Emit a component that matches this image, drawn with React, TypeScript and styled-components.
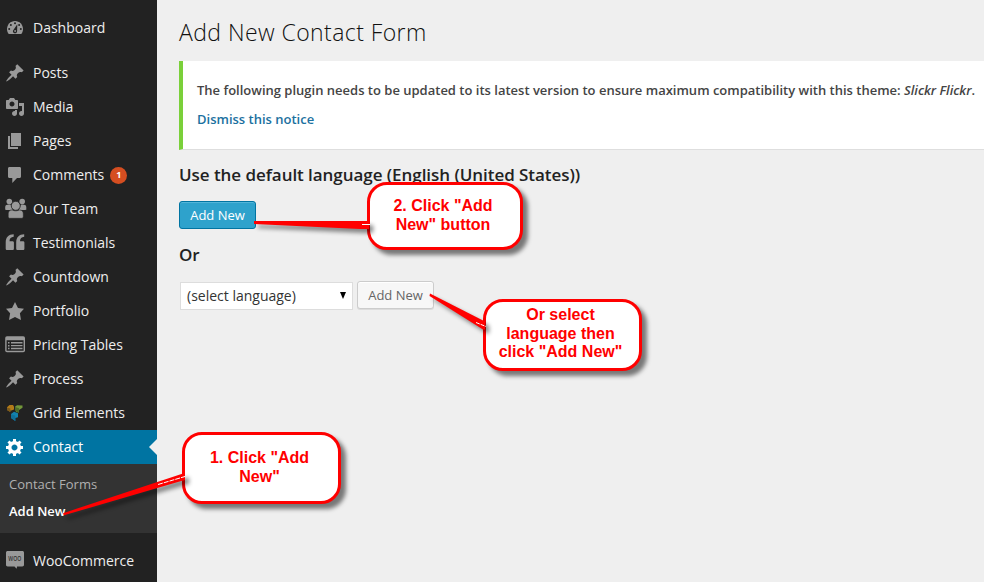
import React from "react";
import styled, { createGlobalStyle, css } from "styled-components";

const GlobalStyle = createGlobalStyle`
  * { box-sizing: border-box; }
  body {
    margin: 0;
    background: #efefef;
    font-family: "Open Sans", sans-serif;
    overflow: hidden;
  }
`;

const Page = styled.div`
  position: relative;
  display: flex;
  width: 984px;
  height: 582px;
  overflow: hidden;
  background: #efefef;
`;

const Sidebar = styled.nav`
  flex: none;
  width: 157px;
  padding-top: 11px;
  background: #222;
`;

const MenuItem = styled.a<{ $active?: boolean; $gap?: boolean }>`
  position: relative;
  display: flex;
  align-items: center;
  height: 34px;
  padding-left: 5px;
  margin-top: ${(p) => (p.$gap ? "11px" : "0")};
  color: ${(p) => (p.$active ? "#fff" : "#eee")};
  background: ${(p) => (p.$active ? "#0074a2" : "transparent")};
  font-size: 14px;
  line-height: 20px;
  white-space: nowrap;
  ${(p) =>
    p.$active &&
    css`
      &::after {
        content: "";
        position: absolute;
        right: 0;
        top: 9px;
        border: solid transparent;
        border-width: 8px 8px 8px 0;
        border-right-color: #efefef;
      }
    `}
`;

const Icon = styled.svg<{ $active?: boolean }>`
  flex: none;
  width: 22px;
  height: 20px;
  margin-right: 6px;
  overflow: visible;
  color: ${(p) => (p.$active ? "#fff" : "#999")};
  fill: currentColor;
`;

const Badge = styled.span`
  display: flex;
  align-items: center;
  justify-content: center;
  width: 17px;
  height: 17px;
  margin-left: 6px;
  border-radius: 50%;
  background: #d54e21;
  color: #fff;
  font-size: 9px;
  font-weight: 700;
`;

const Submenu = styled.div`
  display: flex;
  flex-direction: column;
  height: 69px;
  padding: 7px 0 0 9px;
  background: #333;
`;

const SubItem = styled.a<{ $current?: boolean }>`
  height: 27px;
  line-height: 27px;
  font-size: 13px;
  font-weight: ${(p) => (p.$current ? 600 : 400)};
  color: ${(p) => (p.$current ? "#fff" : "#b0b0b0")};
`;

const Main = styled.main`
  flex: 1;
  min-width: 0;
  padding-left: 22px;
`;

const Title = styled.h1`
  height: 61px;
  margin: 0;
  padding-top: 17px;
  font-size: 23px;
  font-weight: 300;
  letter-spacing: 0.43px;
  line-height: 31px;
  color: #111;
`;

const Notice = styled.section`
  height: 89px;
  padding: 19px 0 0 14px;
  border-left: 4px solid #7ad03a;
  border-bottom: 1px solid #dedede;
  background: #fff;
`;

const NoticeLine = styled.p`
  margin: 0 0 9px;
  font-size: 13px;
  font-weight: 600;
  line-height: 20px;
  color: #444;
  white-space: nowrap;
`;

const NoticeLink = styled.a`
  color: #1c71a0;
`;

const Heading = styled.h3<{ $top: number }>`
  margin: ${(p) => p.$top}px 0 0;
  font-size: 17px;
  font-weight: 600;
  letter-spacing: -0.05px;
  line-height: 24px;
  color: #222;
  white-space: nowrap;
`;

const Button = styled.button<{ $primary?: boolean }>`
  display: block;
  width: 77px;
  height: 28px;
  padding: 0;
  border: 1px solid ${(p) => (p.$primary ? "#0074a2" : "#ccc")};
  border-radius: 3px;
  background: ${(p) => (p.$primary ? "#2ea2cc" : "#f7f7f7")};
  box-shadow: ${(p) =>
    p.$primary
      ? "inset 0 1px 0 rgba(120, 200, 230, 0.5)"
      : "inset 0 1px 0 #fff, 0 1px 0 rgba(0, 0, 0, 0.08)"};
  color: ${(p) => (p.$primary ? "#fff" : "#666")};
  font: 400 13px/26px "Open Sans", sans-serif;
`;

const ButtonSlot = styled.div`
  padding-top: 14px;
`;

const LanguageRow = styled.div`
  display: flex;
  align-items: flex-start;
  margin-top: 14px;
`;

const Select = styled.div`
  display: flex;
  align-items: center;
  justify-content: space-between;
  width: 173px;
  height: 28px;
  margin: 1px 4px 0 1px;
  padding: 0 6px 1px;
  border: 1px solid #ddd;
  background: #fff;
  color: #333;
  font-size: 14px;
  line-height: 19px;
`;

const Caret = styled.span`
  width: 0;
  border: solid transparent;
  border-width: 7px 3.5px 0;
  border-top-color: #000;
`;

const Tails = styled.svg`
  position: absolute;
  inset: 0;
  width: 984px;
  height: 582px;
  pointer-events: none;
  filter: drop-shadow(4px 4px 2px rgba(0, 0, 0, 0.45));
`;

const Callout = styled.div<{ $x: number; $y: number; $w: number; $h: number; $pad: number }>`
  position: absolute;
  left: ${(p) => p.$x}px;
  top: ${(p) => p.$y}px;
  width: ${(p) => p.$w}px;
  height: ${(p) => p.$h}px;
  padding-top: ${(p) => p.$pad}px;
  padding-right: 4px;
  border: 3px solid #f00;
  border-radius: 20px;
  background: #fff;
  box-shadow: 5px 5px 4px rgba(0, 0, 0, 0.5);
  color: #f00;
  font: 700 16px/18.6px "Liberation Sans", Arial, sans-serif;
  text-align: center;
  white-space: pre;
`;

const WooText = styled.text`
  font: 600 6.5px "Open Sans", sans-serif;
  fill: #333;
`;

const pin = (
  <path d="M10.44 3.02l1.82-1.82 6.36 6.35-1.83 1.82c-1.05-.68-2.48-.57-3.41.36l-.75.75c-.92.93-1.04 2.35-.35 3.41l-1.83 1.82-2.41-2.41-2.8 2.79c-.42.42-3.38 2.71-3.8 2.29s1.86-3.39 2.28-3.81l2.79-2.79L4.1 9.36l1.83-1.82c1.05.69 2.48.57 3.4-.36l.75-.75c.93-.92 1.05-2.35.36-3.41z" />
);

const icons: Record<string, React.ReactNode> = {
  dashboard: (
    <g transform="translate(0 -1)">
      <path d="M3.76 17h12.48c1.1-1.37 1.76-3.11 1.76-5 0-4.42-3.58-8-8-8s-8 3.58-8 8c0 1.89.66 3.63 1.76 5z" />
      <g fill="#222">
        <circle cx="10" cy="6.2" r="1" />
        <circle cx="5.9" cy="7.9" r="1" />
        <circle cx="14.1" cy="7.9" r="1" />
        <circle cx="4.2" cy="12" r="1" />
        <circle cx="15.8" cy="12" r="1" />
        <path d="M12.3 7.2l-.2 6.900a2.100 2.100 0 1 1-3.700-1.200z" />
      </g>
      <circle cx="10.1" cy="14" r=".9" />
    </g>
  ),
  pin,
  media: (
    <path d="M13 11V4c0-.55-.45-1-1-1h-1.67L9 1H5L3.67 3H2c-.55 0-1 .45-1 1v7c0 .55.45 1 1 1h10c.55 0 1-.45 1-1zM7 4.5c1.38 0 2.5 1.12 2.5 2.5S8.38 9.5 7 9.5 4.5 8.38 4.5 7 5.62 4.5 7 4.5zM14 6h5v10.5c0 1.38-1.12 2.5-2.5 2.5S14 17.88 14 16.5s1.12-2.5 2.5-2.5c.17 0 .34.02.5.05V9h-3V6zm-4 8.05V13h2v3.5c0 1.38-1.12 2.5-2.5 2.5S7 17.88 7 16.5 8.12 14 9.5 14c.17 0 .34.02.5.05z" />
  ),
  pages: <path d="M6 15V2h10v13H6zm-1 1h8v2H3V5h2v11z" />,
  comment: (
    <path d="M4.5 2h10C15.500 2 16 2.600 16 3.500v8c0 .9-.6 1.500-1.500 1.500H12l-4.700 5V13H4.500C3.600 13 3 12.400 3 11.500v-8C3 2.600 3.600 2 4.500 2z" />
  ),
  team: (
    <>
      <circle cx="4.300" cy="2.600" r="2.800" />
      <circle cx="17.200" cy="2.600" r="2.800" />
      <path d="M.2 11V8.200c0-1.700.9-2.500 2.300-2.500h3.200l2 5.200H1.200c-.7 0-1-.3-1 .1zM21.300 11V8.200c0-1.700-.9-2.500-2.300-2.500h-3.200l-2 5.200h6.500c.7 0 1-.3 1 .1z" />
      <circle cx="10.750" cy="6.800" r="4.500" stroke="#222" strokeWidth=".8" />
      <path d="M3.200 17.500v-2.700c0-2.500 1.300-3.800 3.600-3.800 1.200 0 1.700.8 3.950.8s2.750-.8 3.950-.8c2.300 0 3.600 1.300 3.600 3.800v2.700c0 1.200-.6 1.800-1.800 1.800H5c-1.200 0-1.800-.6-1.800-1.800z" stroke="#222" strokeWidth=".6" />
    </>
  ),
  quote: (
    <path d="M8.700 1.300v2.500C6 4 4.600 5.400 4.500 8.300h2.900c1 0 1.500.5 1.500 1.500v5.700c0 1-.5 1.500-1.500 1.500H2.200c-1 0-1.500-.5-1.500-1.500V9.300C.7 4.200 3.600 1.500 8.700 1.300zM19.200 1.300v2.500C16.500 4 15.100 5.400 15 8.300h2.900c1 0 1.500.5 1.500 1.500v5.700c0 1-.5 1.500-1.500 1.500h-5.200c-1 0-1.500-.5-1.500-1.500V9.300c0-5.100 2.900-7.800 8-8z" />
  ),
  star: <path d="M10 1l3 6 6 .75-4.120 4.620L16 19l-6-3-6 3 1.130-6.630L1 7.750 7 7z" />,
  table: (
    <>
      <rect x=".2" y="1.300" width="19.800" height="15.900" rx="1.800" />
      <path fill="#222" d="M1.600 5.300h17v10.500h-17z" />
      <path d="M3 7h1.500v1.500H3zM6 7h11.500v1.400H6zM3 9.900h1.500v1.500H3zM6 9.900h11.500v1.400H6zM3 12.800h1.500v1.500H3zM6 12.800h11.500v1.400H6z" />
    </>
  ),
  grid: (
    <>
      <path fill="#b27b19" d="M2 4.200L4.500 2H8l1 1.800v2.700L6.500 7.500H5.300V9L2 7z" />
      <path fill="#7c5a1d" d="M2 4.500l3.300 1V9L2 7z" />
      <path fill="#72963a" d="M10 3.700L12 2.200l5.500.3v2.300L14 7v2.500L11 9z" />
      <path fill="#4d6b2a" d="M10 3.900l4 1.300v4.500L10.300 8z" />
      <path fill="#1282ae" d="M6 11l3-2.300 4 1.500v4L10.300 15v3L6 15z" />
      <path fill="#10709a" d="M6 11.300l4.300 1.500V18L6 15z" />
    </>
  ),
  gear: (
    <path d="M18 12h-2.180c-.17.7-.44 1.350-.81 1.930l1.540 1.540-2.100 2.100-1.540-1.540c-.58.36-1.230.63-1.910.79V19H8v-2.180c-.68-.16-1.330-.43-1.910-.79l-1.540 1.540-2.120-2.120 1.540-1.540c-.36-.58-.63-1.230-.79-1.910H1V9.030h2.170c.16-.7.44-1.350.8-1.940L2.430 5.550l2.100-2.100 1.540 1.540c.58-.37 1.240-.64 1.930-.81V2h3v2.180c.68.16 1.330.43 1.910.79l1.540-1.540 2.120 2.120-1.540 1.540c.36.59.64 1.240.8 1.940H18V12zm-8.500 1.500c1.660 0 3-1.340 3-3s-1.340-3-3-3-3 1.340-3 3 1.340 3 3 3z" />
  ),
  woo: (
    <>
      <path d="M2.700 0h14.600c1 0 1.700.7 1.700 1.700v12.100c0 1-.7 1.700-1.700 1.700H12l-.3 2.300-2.200-2.300H2.700c-1 0-1.700-.7-1.700-1.700V1.700C1 .7 1.700 0 2.700 0z" />
      <WooText x="3.300" y="9.800" textLength="13" lengthAdjust="spacingAndGlyphs">
        WOO
      </WooText>
    </>
  ),
};

type Entry = { label: string; icon: string; gap?: boolean; badge?: string; active?: boolean };

const entries: Entry[] = [
  { label: "Dashboard", icon: "dashboard" },
  { label: "Posts", icon: "pin", gap: true },
  { label: "Media", icon: "media" },
  { label: "Pages", icon: "pages" },
  { label: "Comments", icon: "comment", badge: "1" },
  { label: "Our Team", icon: "team" },
  { label: "Testimonials", icon: "quote" },
  { label: "Countdown", icon: "pin" },
  { label: "Portfolio", icon: "star" },
  { label: "Pricing Tables", icon: "table" },
  { label: "Process", icon: "pin" },
  { label: "Grid Elements", icon: "grid" },
  { label: "Contact", icon: "gear", active: true },
];

const Item = ({ label, icon, gap, badge, active }: Entry) => (
  <MenuItem $active={active} $gap={gap}>
    <Icon $active={active} viewBox="0 0 22 20">
      {icons[icon]}
    </Icon>
    {label}
    {badge && <Badge>{badge}</Badge>}
  </MenuItem>
);

export default function App() {
  return (
    <>
      <GlobalStyle />
      <Page>
        <Sidebar>
          {entries.map((e) => (
            <Item key={e.label} {...e} />
          ))}
          <Submenu>
            <SubItem>Contact Forms</SubItem>
            <SubItem $current>Add New</SubItem>
          </Submenu>
          <Item label="WooCommerce" icon="woo" gap />
        </Sidebar>
        <Main>
          <Title>Add New Contact Form</Title>
          <Notice>
            <NoticeLine>
              The following plugin needs to be updated to its latest version to ensure maximum
              compatibility with this theme: <em>Slickr Flickr</em>.
            </NoticeLine>
            <NoticeLine>
              <NoticeLink>Dismiss this notice</NoticeLink>
            </NoticeLine>
          </Notice>
          <Heading $top={13}>Use the default language (English (United States))</Heading>
          <ButtonSlot>
            <Button $primary>Add New</Button>
          </ButtonSlot>
          <Heading $top={14}>Or</Heading>
          <LanguageRow>
            <Select>
              (select language)
              <Caret />
            </Select>
            <Button>Add New</Button>
          </LanguageRow>
        </Main>
        <Callout $x={182} $y={432} $w={159} $h={72} $pad={14}>{'1. Click "Add\nNew"'}</Callout>
        <Callout $x={367} $y={182} $w={156} $h={68} $pad={12}>{'2. Click "Add\nNew" button'}</Callout>
        <Callout $x={483} $y={299} $w={159} $h={72} $pad={4}>
          {'Or select\nlanguage then\nclick "Add New"'}
        </Callout>
        <Tails viewBox="0 0 984 582">
          <g fill="#f00">
            <path d="M63 513.200L183 473.500h2v6.500l-2 .5L64 515.300z" />
            <path d="M254 221h115v8h-9L254 224z" />
            <path d="M430 293.500L485 321.500v8h-2L429.500 296z" />
          </g>
          <g stroke="#fff" strokeWidth="1">
            <path d="M158 484.500L185 476.500" strokeDasharray="5 1" />
            <path d="M362 224.500h8" />
            <path d="M476 322.500l10 4" strokeDasharray="4 1" />
          </g>
        </Tails>
      </Page>
    </>
  );
}
